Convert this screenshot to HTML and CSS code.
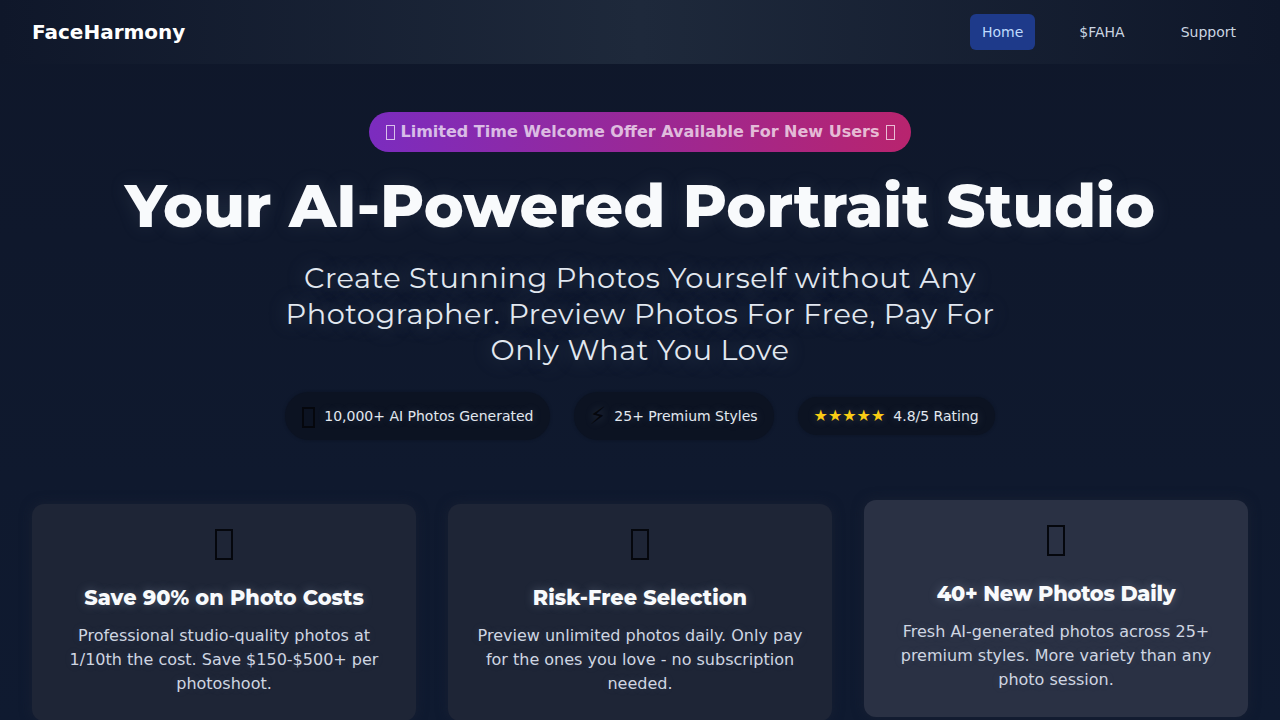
FILE: index.html
```html
<!DOCTYPE html>
<html lang="en">
<head>
    <meta charset="UTF-8">
    <meta name="viewport" content="width=device-width, initial-scale=1.0">
    <title>FaceHarmony - Your AI-Powered Portrait Studio</title>
    <link rel="stylesheet" href="styles.css">
</head>
<body>

    <nav class="navbar">
        <a class="brand" href="#">FaceHarmony</a>
        <div class="nav-links">
            <a class="nav-link active" href="#">Home</a>
            <a class="nav-link" href="#">$FAHA</a>
            <a class="nav-link" href="#">Support</a>
        </div>
    </nav>

    <main class="page">
        <section class="hero">
            <div class="offer"><span class="tofu"></span> Limited Time Welcome Offer Available For New Users <span class="tofu"></span></div>
            <h1>Your AI-Powered Portrait Studio</h1>
            <p class="subtitle">Create Stunning Photos Yourself without Any Photographer. Preview Photos For Free, Pay For Only What You Love</p>
            <div class="stats">
                <div class="stat"><span class="tofu tofu-stat"></span><span>10,000+ AI Photos Generated</span></div>
                <div class="stat"><span class="stat-icon">⚡</span><span>25+ Premium Styles</span></div>
                <div class="stat"><span class="stars">★★★★★</span><span>4.8/5 Rating</span></div>
            </div>
        </section>

        <section class="features">
            <div class="card">
                <div class="card-icon"><span class="tofu tofu-card"></span></div>
                <h3>Save 90% on Photo Costs</h3>
                <p>Professional studio-quality photos at 1/10th the cost. Save $150-$500+ per photoshoot.</p>
            </div>
            <div class="card">
                <div class="card-icon"><span class="tofu tofu-card"></span></div>
                <h3>Risk-Free Selection</h3>
                <p>Preview unlimited photos daily. Only pay for the ones you love - no subscription needed.</p>
            </div>
            <div class="card card-hover">
                <div class="card-icon"><span class="tofu tofu-card"></span></div>
                <h3>40+ New Photos Daily</h3>
                <p>Fresh AI-generated photos across 25+ premium styles. More variety than any photo session.</p>
            </div>
        </section>
    </main>

</body>
</html>
```

FILE: styles.css
```css
* {
    box-sizing: border-box;
}
body {
    font-family: "DejaVu Sans", sans-serif;
    background: linear-gradient(180deg, #0f172a 0%, #0f1a30 100%);
    color: #e2e8f0;
    margin: 0;
    height: 720px;
    overflow: hidden;
}
a {
    text-decoration: none;
}
.navbar {
    display: flex;
    justify-content: space-between;
    align-items: center;
    height: 64px;
    padding: 0 32px;
    background: linear-gradient(90deg, #0f172a 0%, #1e293b 50%, #0f172a 100%);
}
.brand {
    font-size: 20px;
    font-weight: 700;
    color: #ffffff;
}
.nav-links {
    display: flex;
    gap: 32px;
}
.nav-link {
    padding: 8px 12px;
    border-radius: 6px;
    font-size: 14px;
    line-height: 20px;
    color: #cbd5e1;
}
.nav-link.active {
    background-color: #1e3a8a;
    color: #bfdbfe;
}
.page {
    padding: 48px 32px 0;
}
.hero {
    display: flex;
    flex-direction: column;
    align-items: center;
    text-align: center;
}
/* missing emoji glyphs show up as empty boxes in the design */
.tofu {
    display: inline-block;
    width: 9px;
    height: 15px;
    margin: 0 0 0 1px;
    border: 1px solid currentColor;
    vertical-align: -3px;
}
.tofu-stat {
    width: 13px;
    height: 21px;
    margin: 7px 1px 4px;
    border: 2px solid #05070d;
}
.tofu-card {
    width: 18px;
    height: 31px;
    margin: 0;
    border: 2px solid #05070d;
}
.offer {
    padding: 10px 16px;
    border-radius: 20px;
    font-size: 16px;
    font-weight: 700;
    line-height: 20px;
    color: rgba(255, 255, 255, 0.7);
    background: linear-gradient(90deg, #7b2cbf, #b8246e);
}
h1 {
    margin: 16px 0;
    font-family: Montserrat, "DejaVu Sans", sans-serif;
    font-size: 60.2px;
    font-weight: 800;
    line-height: 76px;
    color: #f8fafc;
    text-shadow: 0 0 20px rgba(148, 163, 184, 0.15);
}
.subtitle {
    max-width: 720px;
    margin: 0 0 24px;
    font-family: Montserrat, "DejaVu Sans", sans-serif;
    font-size: 28.8px;
    font-weight: 400;
    letter-spacing: 0.5px;
    line-height: 36px;
    color: #e2e8f0;
    text-shadow: 0 0 20px rgba(148, 163, 184, 0.35);
}
.stats {
    display: flex;
    align-items: center;
    justify-content: center;
    gap: 24px;
}
.stat {
    display: flex;
    align-items: center;
    gap: 8px;
    padding: 8px 16px;
    border-radius: 24px;
    background-color: #0c1322;
    box-shadow: 0 0 3px #0c1322;
    font-size: 14px;
    color: #e2e8f0;
    text-shadow: 0 0 10px rgba(148, 163, 184, 0.3);
}
.stat-icon {
    font-size: 24px;
    line-height: 32px;
    color: #05070d;
}
.stars {
    font-size: 16px;
    line-height: 22px;
    color: #facc15;
}
.features {
    display: grid;
    grid-template-columns: repeat(3, 1fr);
    gap: 32px;
    margin-top: 64px;
}
.card {
    padding: 25px 24px;
    border-radius: 12px;
    background-color: #1e2536;
    box-shadow: 0 0 12px rgba(30, 37, 54, 0.6);
    text-align: center;
}
.card-hover {
    margin-top: -4px;
    margin-bottom: 4px;
    background-color: #2a3144;
}
.card-icon {
    display: flex;
    justify-content: center;
    height: 48px;
    margin-bottom: 8px;
}
.card h3 {
    margin: 0 0 13px;
    font-family: Montserrat, "DejaVu Sans", sans-serif;
    font-size: 20.8px;
    font-weight: 800;
    letter-spacing: 0.05px;
    line-height: 26px;
    color: #f8fafc;
    text-shadow: 0 0 10px rgba(148, 163, 184, 0.4);
}
.card-hover h3 {
    letter-spacing: -0.25px;
}
.card p {
    margin: 0;
    font-size: 16px;
    line-height: 24px;
    color: #cfd6e2;
    text-shadow: 0 0 10px rgba(148, 163, 184, 0.15);
}
```
